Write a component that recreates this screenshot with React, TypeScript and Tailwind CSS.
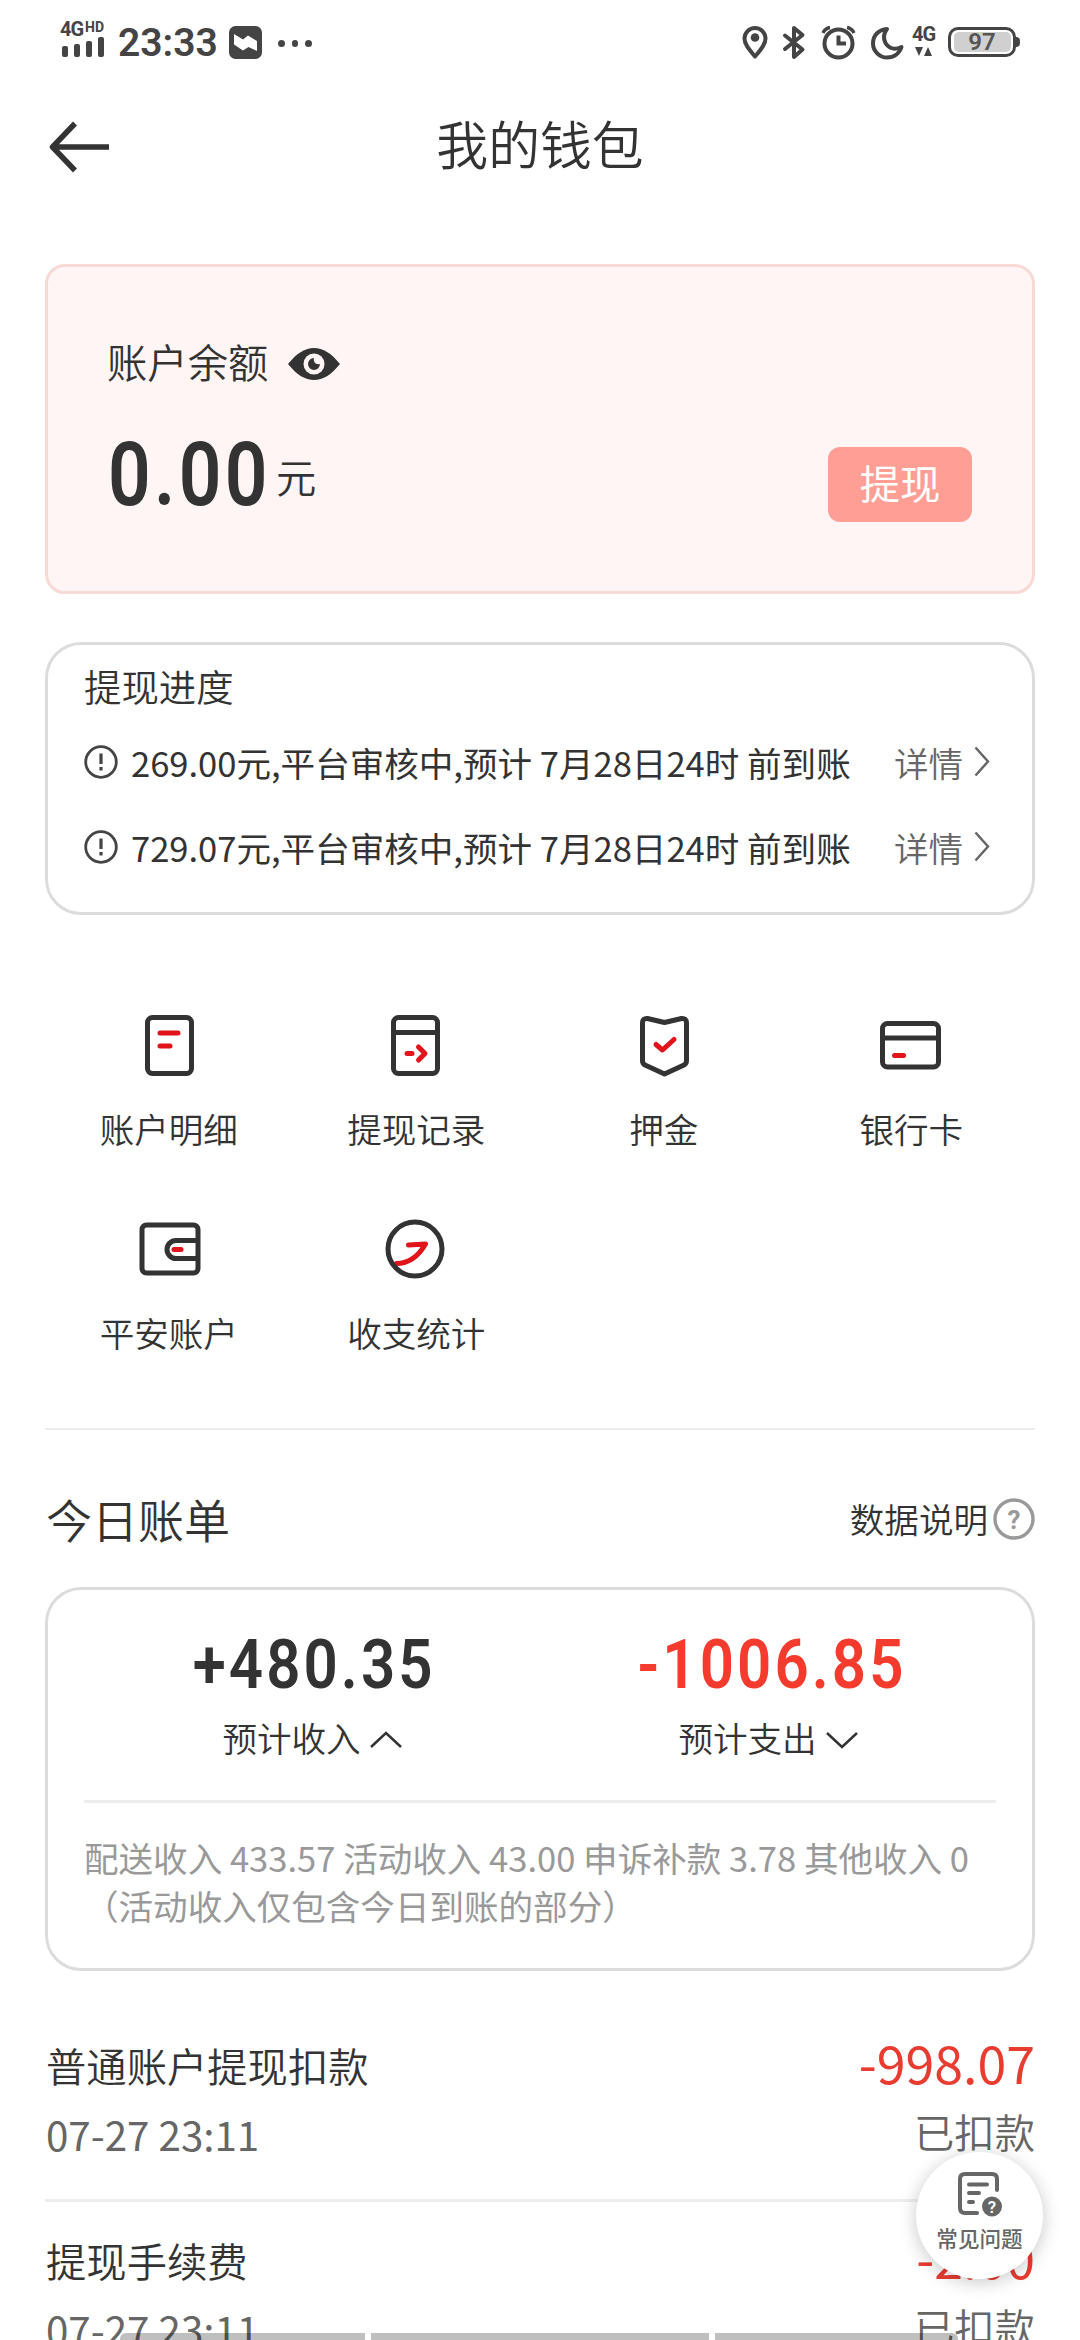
import type { ReactNode } from "react";

const progress = [
  { id: 1, text: "269.00元,平台审核中,预计 7月28日24时 前到账" },
  { id: 2, text: "729.07元,平台审核中,预计 7月28日24时 前到账" },
];

const bills = [
  { id: 1, name: "普通账户提现扣款", time: "07-27 23:11", amount: "-998.07", status: "已扣款" },
  { id: 2, name: "提现手续费", time: "07-27 23:11", amount: "-2.00", status: "已扣款" },
];

function StatusBar() {
  return (
    <div className="flex h-[86px] items-start justify-between pt-[22px] pr-[60px] pl-[60px] font-['Roboto',sans-serif] text-[#444]">
      <div className="flex">
        <div className="w-[46px]">
          <div className="flex h-[15px] items-start font-bold">
            <span className="w-[25px] text-[20px] leading-[14px] tracking-[-1px]">4G</span>
            <span className="text-[14px] leading-[10px]">HD</span>
          </div>
          <div className="flex h-[20px] items-end gap-[6px] pl-[2px]">
            <i className="h-[11px] w-[6px] rounded-[2px] bg-[#444]" />
            <i className="h-[13px] w-[6px] rounded-[2px] bg-[#444]" />
            <i className="h-[16px] w-[6px] rounded-[2px] bg-[#444]" />
            <i className="h-[20px] w-[6px] rounded-[2px] bg-[#444]" />
          </div>
        </div>
        <span className="ml-[12px] w-[111px] text-[39px] leading-[43px] font-semibold">23:33</span>
        <svg className="mt-[4px]" width="33" height="33" viewBox="0 0 33 33">
          <rect width="33" height="33" rx="6.5" fill="#444" />
          <path d="M5 8 L14 13.5 L19 9.5 L28 15 V25 L19.5 21 L14 24.5 L5 18.5 Z" fill="#fff" />
        </svg>
        <div className="mt-[18px] ml-[16px] flex gap-[7px]">
          <i className="size-[6.5px] rounded-full bg-[#444]" />
          <i className="size-[6.5px] rounded-full bg-[#444]" />
          <i className="size-[6.5px] rounded-full bg-[#444]" />
        </div>
      </div>

      <div className="flex pt-[3px]">
        <svg width="26" height="36" viewBox="0 0 26 36" fill="none">
          <path d="M13 31.5 C8 25.5 2.5 20 2.5 13.5 A10.5 10.5 0 0 1 23.5 13.5 C23.5 20 18 25.5 13 31.5 Z" stroke="#444" strokeWidth="4" strokeLinejoin="round" />
          <circle cx="13" cy="12.5" r="4.3" fill="#444" />
        </svg>
        <svg className="ml-[14px]" width="24" height="36" viewBox="0 0 24 36" fill="none" stroke="#444" strokeWidth="4" strokeLinejoin="round" strokeLinecap="round">
          <path d="M3 10.5 L20.5 24.5 L12 32 V3 L20.5 10 L3 24" />
        </svg>
        <svg className="ml-[15px]" width="36" height="36" viewBox="0 0 36 36" fill="none" stroke="#444">
          <circle cx="17.5" cy="18.5" r="14" strokeWidth="4" />
          <path d="M17.5 10.5 V18.5 H25" strokeWidth="4" />
          <path d="M2 8 Q4 3.5 9 2.5 M33 8 Q31 3.5 26 2.5" strokeWidth="3.4" />
        </svg>
        <svg className="ml-[13px]" width="36" height="36" viewBox="0 0 36 36" fill="none">
          <path d="M17 4 C9 4.5 3 10 3 18.5 C3 26 9.5 32.5 17 32.5 C24 32.5 29.5 28.5 31.5 22 C24 25.5 18.5 23 15.5 18 C13 13 13.5 8.5 17 4 Z" stroke="#444" strokeWidth="4" strokeLinejoin="round" />
        </svg>
        <div className="ml-[6px] w-[26px] pt-[2px]">
          <div className="text-[20px] leading-[15px] font-bold tracking-[-1px]">4G</div>
          <svg className="mt-[5px] ml-[3px]" width="18" height="9" viewBox="0 0 18 9" fill="#444">
            <path d="M0 0 H8 L4 9 Z M9 9 H17 L13 0 Z" />
          </svg>
        </div>
        <div className="mt-[2px] ml-[10px] flex h-[30px] w-[68px] items-center justify-center rounded-[10px] border-3 border-[#444]">
          <span className="h-[20px] w-[57px] rounded-[5px] bg-[#d0d0d0] text-center text-[24px] leading-[20px] font-semibold text-[#555]">97</span>
        </div>
        <i className="mt-[12px] h-[10px] w-[4px] rounded-r-[4px] bg-[#444]" />
      </div>
    </div>
  );
}

function Chevron({ className, d = "M1.5 1.5 L14 15.5 L1.5 29.5", w = 16, h = 31 }: { className?: string; d?: string; w?: number; h?: number }) {
  return (
    <svg className={className} width={w} height={h} viewBox={`0 0 ${w} ${h}`} fill="none" stroke="currentColor" strokeWidth="2.5">
      <path d={d} />
    </svg>
  );
}

function MenuItem({ label, children }: { label: string; children: ReactNode }) {
  return (
    <div className="flex h-[204px] flex-col items-center">
      <svg width="72" height="72" viewBox="0 0 72 72" fill="none" stroke="#333" strokeWidth="5" strokeLinecap="round" strokeLinejoin="round">
        {children}
      </svg>
      <span className="mt-[27px] text-[34.56px] leading-[40px]">{label}</span>
    </div>
  );
}

function Menu() {
  return (
    <div className="mt-[94px] grid h-[419px] grid-cols-4 content-start">
      <MenuItem label="账户明细">
        <rect x="14.5" y="8.5" width="44" height="56" rx="5" />
        <path d="M27 24 H45 M27 37 H37" stroke="#e1141b" />
      </MenuItem>
      <MenuItem label="提现记录">
        <rect x="13.5" y="8.5" width="44" height="56" rx="5" />
        <path d="M14 23.5 H57" />
        <path d="M27 44.5 H32 M38.5 38 L45 44.5 L38.5 51" stroke="#e1141b" />
      </MenuItem>
      <MenuItem label="押金">
        <path d="M14.5 14 Q14.5 9 19.5 9.5 L36.5 13.5 L53.5 9.5 Q58.5 9 58.5 14 V52 Q58.5 54.5 56 56 L36.5 65 L17 56 Q14.5 54.5 14.5 52 Z" />
        <path d="M28 35.5 L34.5 41 L46 30.5" stroke="#e1141b" />
      </MenuItem>
      <MenuItem label="银行卡">
        <rect x="7.500" y="14.5" width="56" height="43.5" rx="5" />
        <path d="M8 29 H63" />
        <path d="M19.500 46.5 H28.500" stroke="#e1141b" />
      </MenuItem>
      <MenuItem label="平安账户">
        <rect x="9" y="12" width="56" height="48" rx="4.5" />
        <path d="M64 27.5 H43 A9 9 0 0 0 43 45.5 H64" />
        <path d="M41 36.5 H48" stroke="#e1141b" />
      </MenuItem>
      <MenuItem label="收支统计">
        <path d="M16.5 50.5 C29 50.5 38.5 43 45.5 31 L28.5 32" stroke="#e1141b" />
        <circle cx="35" cy="36" r="27" />
      </MenuItem>
    </div>
  );
}

function TodayBill() {
  return (
    <>
      <div className="mt-[55px] flex h-[66px] items-center justify-between">
        <h2 className="ml-[1px] text-[46px] leading-[60px]">今日账单</h2>
        <div className="flex items-start pt-[2px] text-[34.56px] leading-[40px]">
          数据说明
          <svg className="ml-[5px]" width="42" height="42" viewBox="0 0 42 42">
            <circle cx="21" cy="21" r="19" fill="none" stroke="#999" strokeWidth="3.4" />
            <text x="21" y="30.5" textAnchor="middle" fontFamily="Roboto" fontWeight="700" fontSize="26" fill="#999">?</text>
          </svg>
        </div>
      </div>
      <section className="mt-[36px] h-[384px] rounded-[36px] border-3 border-[#dcdcdc] px-[36px] pt-[43px]">
        <div className="grid h-[170px] grid-cols-2 border-b-3 border-[#ededed] text-center">
          <div>
            <div className="scale-x-87 pl-[5px] font-['Roboto',sans-serif] text-[69px] leading-[64px] font-semibold tracking-[3.5px]">+480.35</div>
            <div className="mt-[20px] flex items-center justify-center gap-[9px] text-[34.56px] leading-[40px]">
              预计收入
              <Chevron className="mt-[5px]" d="M1 16 L16 2 L31 16" w={32} h={18} />
            </div>
          </div>
          <div>
            <div className="scale-x-87 pl-[9px] font-['Roboto',sans-serif] text-[69px] leading-[64px] font-semibold tracking-[3.5px] text-[#f43b2d]">-1006.85</div>
            <div className="mt-[20px] flex items-center justify-center gap-[9px] text-[34.56px] leading-[40px]">
              预计支出
              <Chevron className="mt-[5px]" d="M1 2 L16 16 L31 2" w={32} h={18} />
            </div>
          </div>
        </div>
        <p className="mt-[31px] text-[34.56px] leading-[47.5px] font-normal whitespace-nowrap text-[#999]">
          配送收入 433.57 活动收入 43.00 申诉补款 3.78 其他收入 0
          <br />
          （活动收入仅包含今日到账的部分）
        </p>
      </section>
    </>
  );
}

function FaqButton() {
  return (
    <button className="absolute top-[2152px] left-[916px] flex size-[127px] flex-col items-center rounded-full bg-white pt-[19px] text-[#666] shadow-[0_3px_18px_rgba(0,0,0,0.22)]">
      <svg width="46" height="46" viewBox="0 0 46 46" fill="none" stroke="#666" strokeWidth="4" strokeLinecap="round">
        <path d="M40 19 V8 Q40 3 35 3 H8 Q3 3 3 8 V37 Q3 42 8 42 H20" />
        <path d="M12 13.5 H30 M12 22 H22 M12 31 H16" />
        <circle cx="35" cy="35.5" r="10" fill="#666" stroke="none" />
        <text x="35" y="41.5" textAnchor="middle" fontFamily="Roboto" fontWeight="600" fontSize="17" fill="#fff" stroke="none">?</text>
      </svg>
      <span className="mt-[8px] text-[21.6px] leading-[26px] font-medium">常见问题</span>
    </button>
  );
}

export default function App() {
  return (
    <main className="relative h-[2340px] w-[1080px] overflow-hidden bg-white font-['Noto_Sans_CJK_SC',sans-serif] font-[350] text-[#333]">
      <StatusBar />
      <header className="grid h-[114px] grid-cols-[200px_1fr_200px] items-center">
        <svg className="mt-[8px] ml-[49px]" width="60" height="52" viewBox="0 0 60 52" fill="none" stroke="#333" strokeWidth="5.5">
          <path d="M26 2.5 L3.5 26 L26 49.5 M4 26 H60" strokeLinejoin="round" />
        </svg>
        <h1 className="text-center text-[51.84px] leading-[60px]">我的钱包</h1>
      </header>

      <div className="px-[45px] pt-[64px]">
        <section className="h-[330px] rounded-[20px] border-3 border-[#f7d9d5] bg-[#fff5f4] pt-[74px] pr-[60px] pl-[59px]">
          <div className="flex h-[40px] items-center text-[40.32px] leading-[40px]">
            账户余额
            <svg className="mt-[6px] ml-[20px]" width="52" height="32" viewBox="0 0 52 32">
              <path d="M0 16 C9 5 17 0 26 0 C35 0 43 5 52 16 C43 27 35 32 26 32 C17 32 9 27 0 16 Z" fill="#333" />
              <circle cx="26" cy="16" r="10.5" fill="#fff5f4" />
              <path d="M26 10 A6 6 0 1 0 32 16 C28 17 25 14 26 10 Z" fill="#333" />
            </svg>
          </div>
          <div className="mt-[66px] flex items-start">
            <span className="ml-[1px] w-[168px] origin-left scale-x-84 font-['Roboto',sans-serif] text-[89px] leading-[56px] font-semibold tracking-[4px]">0.00</span>
            <span className="text-[40.32px] leading-[58px]">元</span>
            <button className="ml-auto h-[75px] w-[144px] rounded-[12px] bg-[#ff9e94] pb-[5px] text-[40.32px] leading-[70px] font-normal text-white">提现</button>
          </div>
        </section>

        <section className="mt-[48px] h-[273px] rounded-[36px] border-3 border-[#dcdcdc] px-[36px] pt-[20px]">
          <h3 className="text-[37.44px] leading-[42px]">提现进度</h3>
          <div className="mt-[12px]">
            {progress.map((item) => (
              <div key={item.id} className="flex h-[85px] items-center text-[34.56px] leading-[40px]">
                <svg className="mr-[13px]" width="34" height="34" viewBox="0 0 34 34" fill="none" stroke="#444" strokeWidth="2.8">
                  <circle cx="17" cy="17" r="15.3" />
                  <path d="M17 8.5 V19 M17 22 V25.5" strokeWidth="3.2" />
                </svg>
                <span className="font-normal">{item.text}</span>
                <span className="ml-auto text-[#666]">详情</span>
                <Chevron className="mr-[6px] ml-[11px] text-[#666]" />
              </div>
            ))}
          </div>
        </section>

        <Menu />
        <div className="h-[2px] bg-[#ebebeb]" />
        <TodayBill />

        <div className="mt-[36px]">
          {bills.map((bill) => (
            <div key={bill.id} className="flex h-[195px] justify-between border-b-3 border-[#ededed] pt-[30px]">
              <div className="ml-[1px] pt-[3px]">
                <div className="text-[40.32px] leading-[50px]">{bill.name}</div>
                <div className="mt-[19px] text-[40.32px] leading-[50px] font-normal text-[#666]">{bill.time}</div>
              </div>
              <div className="text-right">
                <div className="text-[51.84px] leading-[50px] font-normal text-[#e93c31]">{bill.amount}</div>
                <div className="mt-[19px] text-[40.32px] leading-[50px] text-[#666]">{bill.status}</div>
              </div>
            </div>
          ))}
        </div>
      </div>

      <FaqButton />

      {/* gesture hints along the bottom edge */}
      <div className="absolute bottom-0 left-[120px] flex h-[7px] gap-[6px]">
        <i className="w-[245px] rounded-tl-[6px] bg-black/25" />
        <i className="w-[338px] bg-black/25" />
        <i className="w-[243px] rounded-tr-[6px] bg-black/25" />
      </div>
    </main>
  );
}
